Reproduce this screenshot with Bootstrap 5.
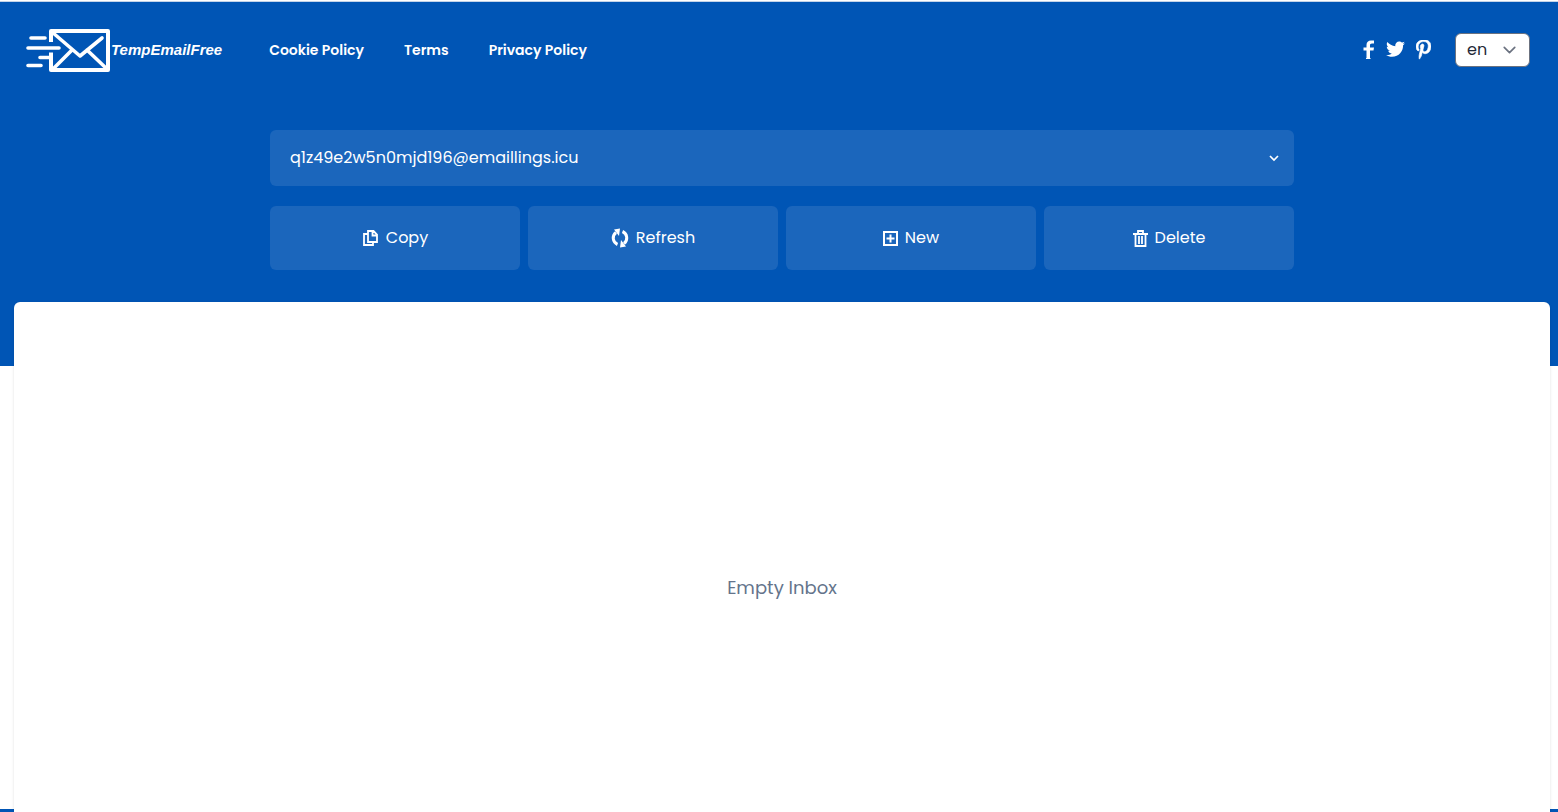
<!DOCTYPE html>
<html lang="en">
<head>
<meta charset="utf-8">
<meta name="viewport" content="width=device-width, initial-scale=1">
<title>TempEmailFree</title>
<link href="https://cdn.jsdelivr.net/npm/bootstrap@5.3.0/dist/css/bootstrap.min.css" rel="stylesheet">
<style>
  :root { --brand: #0055b5; --panel: #1b66bc; }
  body { font-family: Poppins, Inter, "Open Sans", sans-serif; font-size: 16px; line-height: 24px; }
  .page { scrollbar-width: none; }
  .page::-webkit-scrollbar { display: none; }
  .hero { background: var(--brand); border-top: 1px solid #fff; box-shadow: inset 0 1px #c3d3e8; padding: 0 8px 96px 14px; }
  .topbar { padding: 27px 20px 28px 12px; }
  .brand-name { font: italic bold 15px/24px "Liberation Sans", Arial, sans-serif; }
  .links { gap: 40px; margin-left: 47px; font-size: 14px; font-weight: 600; }
  .social { gap: 11px; margin-right: 24px; }
  .lang { width: 75px; height: 34px; padding: 0 10px 0 11px; border: 1px solid #6b7280; border-radius: 6px; color: #1f2937; font-size: 16px; line-height: 30px;
    background: #fff url("data:image/svg+xml,%3Csvg xmlns='http://www.w3.org/2000/svg' viewBox='0 0 20 20'%3E%3Cpath d='m5 7 5 5 5-5' fill='none' stroke='%236b7280' stroke-width='1.6' stroke-linecap='round' stroke-linejoin='round'/%3E%3C/svg%3E") no-repeat right 9px center / 21px; }
  .tools { max-width: 1024px; padding-top: 30px; }
  .mailbox { height: 56px; padding: 0 40px 0 20px; border: 0; border-radius: 6px; color: #fff; margin-bottom: 20px;
    background: var(--panel) url("data:image/svg+xml,%3Csvg xmlns='http://www.w3.org/2000/svg' viewBox='0 0 10 10'%3E%3Cpath d='m1 3 4 4 4-4' fill='none' stroke='white' stroke-width='1.7'/%3E%3C/svg%3E") no-repeat right 15px center / 10px; }
  .tool { --bs-btn-color: #fff; --bs-btn-bg: var(--panel); --bs-btn-hover-color: #fff; --bs-btn-hover-bg: #2d73c3; --bs-btn-border-radius: 6px; --bs-btn-border-width: 0; height: 64px; gap: 7px; }
  .inbox { margin: -64px 8px 0 14px; min-height: 572px; border-radius: 6px; box-shadow: 0 1px 3px rgba(0,0,0,.12); color: #64748b; font-size: 18px; z-index: 1; }
  .foot { background: var(--brand); margin-top: -65px; min-height: 65px; }
</style>
</head>
<body>
<div class="page vh-100 overflow-auto">
  <header class="hero">
    <nav class="topbar d-flex align-items-center flex-wrap" aria-label="Main">
      <a href="#" class="d-flex align-items-center text-white text-decoration-none">
        <svg width="85" height="44" viewBox="0 0 85 44" fill="none" stroke="#fff" stroke-width="3.600" stroke-linecap="round" stroke-linejoin="round" aria-hidden="true">
          <path d="M5 10H19M2 20H33M14 29.500H25M2 37.500H15"/>
          <path d="M25 14V3H82V42H25V24.500" stroke-width="4" stroke-linecap="butt"/>
          <path d="M26 4 54 28 76 10M46 22 27 41M61 22 81 41"/>
        </svg>
        <span class="brand-name">TempEmailFree</span>
      </a>
      <div class="links d-flex me-auto">
        <a class="text-white text-decoration-none" href="#">Cookie Policy</a>
        <a class="text-white text-decoration-none" href="#">Terms</a>
        <a class="text-white text-decoration-none" href="#">Privacy Policy</a>
      </div>
      <div class="social d-flex align-items-center">
        <a href="#" class="d-flex" aria-label="Facebook"><svg width="12" height="20" viewBox="0 0 12 20" fill="#fff"><path d="M3.500 7.500V5C3.500 2.200 5.300.5 8 .5h3v3H9C7.500 3.500 7 4.200 7 5.300v2.200h4l-.5 3H7V18h.5v1H3v-1h.5v-7.500H.5v-3z"/></svg></a>
        <a href="#" class="d-flex" aria-label="Twitter"><svg width="19" height="20" viewBox="0 24 512 512" fill="#fff"><path d="M459.370 151.716c.325 4.548.325 9.097.325 13.645 0 138.720-105.583 298.558-298.558 298.558-59.452 0-114.680-17.219-161.137-47.106 8.447.974 16.568 1.299 25.340 1.299 49.055 0 94.213-16.568 130.274-44.832-46.132-.975-84.792-31.188-98.112-72.772 6.498.974 12.995 1.624 19.818 1.624 9.421 0 18.843-1.300 27.614-3.573-48.081-9.747-84.143-51.980-84.143-102.985v-1.299c13.969 7.797 30.214 12.670 47.431 13.319-28.264-18.843-46.781-51.005-46.781-87.391 0-19.492 5.197-37.360 14.294-52.954 51.655 63.675 129.300 105.258 216.365 109.807-1.624-7.797-2.599-15.918-2.599-24.040 0-57.828 46.782-104.934 104.934-104.934 30.213 0 57.502 12.670 76.670 33.137 23.715-4.548 46.456-13.320 66.599-25.340-7.798 24.366-24.366 44.833-46.132 57.827 21.117-2.273 41.584-8.122 60.426-16.243-14.292 20.791-32.161 39.308-52.628 54.253z"/></svg></a>
        <a href="#" class="d-flex" aria-label="Pinterest"><svg width="15" height="20" viewBox="0 16 384 512" fill="#fff" stroke="#fff" stroke-width="16"><path d="M204 6.500C101.400 6.500 0 74.900 0 185.600 0 256 39.600 296 63.600 296c9.900 0 15.600-27.600 15.600-35.400 0-9.300-23.700-29.100-23.700-67.800 0-80.400 61.200-137.400 140.400-137.400 68.100 0 118.500 38.700 118.500 109.800 0 53.100-21.300 152.700-90.300 152.700-24.900 0-46.200-18-46.200-43.800 0-37.800 26.400-74.400 26.400-113.400 0-66.200-93.900-54.200-93.900 25.800 0 16.800 2.100 35.400 9.600 50.700-13.800 59.400-42 147.900-42 209.100 0 18.900 2.700 37.500 4.500 56.400 3.400 3.800 1.700 3.400 6.900 1.500 50.400-69 48.600-82.500 71.400-172.800 12.300 23.400 44.100 36 69.300 36 106.200 0 153.900-103.500 153.900-196.800C384 71.300 298.200 6.500 204 6.500z"/></svg></a>
      </div>
      <select class="lang form-select" aria-label="Language"><option>en</option></select>
    </nav>
    <main class="tools mx-auto">
      <select class="mailbox form-select" aria-label="Email address"><option>q1z49e2w5n0mjd196@emaillings.icu</option></select>
      <div class="row row-cols-2 row-cols-md-4 g-2">
        <div class="col"><button type="button" class="tool btn w-100 d-flex align-items-center justify-content-center">
          <svg width="17" height="18" viewBox="0 0 17 18" fill="none" stroke="#fff" stroke-width="1.800" aria-hidden="true"><path d="M6 2h5.500L15 5.500V13H6zM10.500 2v4.500H15M6 5H2v11h9v-3"/></svg>Copy</button></div>
        <div class="col"><button type="button" class="tool btn w-100 d-flex align-items-center justify-content-center">
          <svg width="18" height="20" viewBox="0 0 18 20" fill="none" stroke="#fff" stroke-width="3" aria-hidden="true"><path d="M6.500 16.500A7 7 0 0 1 5 4.500M11.500 3.500A7 7 0 0 1 13 15.500"/><path d="M3 1.500 9 .5 8 8zM15 18.500 9 19.500 10 12z" fill="#fff" stroke="none"/></svg>Refresh</button></div>
        <div class="col"><button type="button" class="tool btn w-100 d-flex align-items-center justify-content-center">
          <svg width="15" height="15" viewBox="0 0 15 15" fill="none" stroke="#fff" stroke-width="2" aria-hidden="true"><path d="M1 1h13v13H1zM7.500 3.500v8M3.500 7.500h8"/></svg>New</button></div>
        <div class="col"><button type="button" class="tool btn w-100 d-flex align-items-center justify-content-center">
          <svg width="15" height="17" viewBox="0 0 15 17" fill="none" stroke="#fff" stroke-width="1.800" aria-hidden="true"><path d="M0 4h15M5 3.500V1h5v2.500M2.500 4v12h10V4M6 6v8M9 6v8"/></svg>Delete</button></div>
      </div>
    </main>
  </header>
  <section class="inbox position-relative bg-white d-flex align-items-center justify-content-center">Empty Inbox</section>
  <footer class="foot"></footer>
</div>
<script src="https://cdn.jsdelivr.net/npm/bootstrap@5.3.0/dist/js/bootstrap.bundle.min.js"></script>
</body>
</html>
